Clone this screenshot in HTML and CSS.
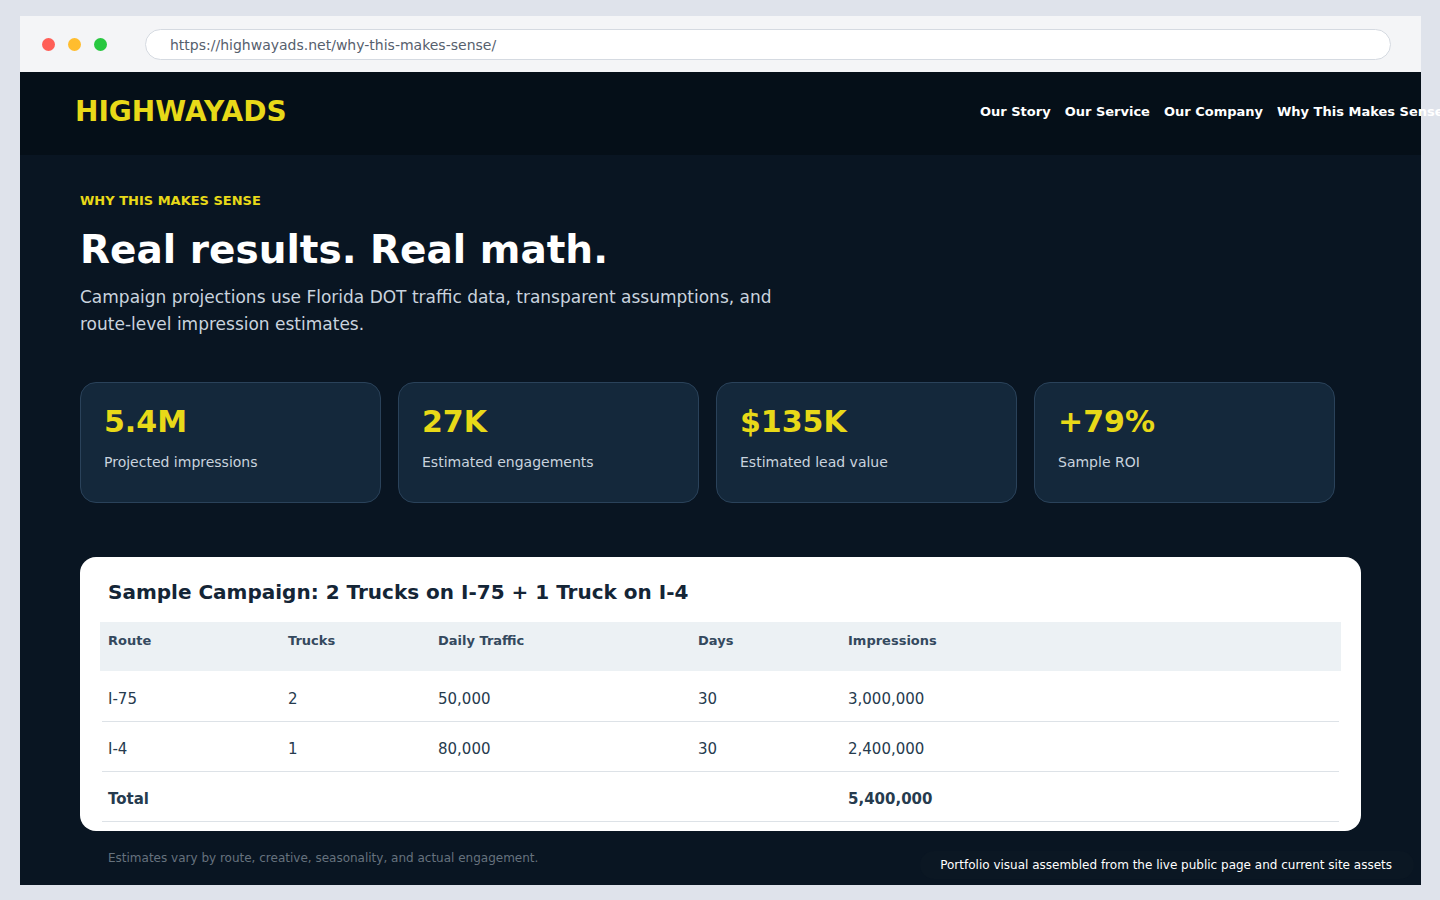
FILE: index.html
```html
<!DOCTYPE html>
<html lang="en">

<head>
  <meta charset="UTF-8">
  <meta name="viewport" content="width=device-width, initial-scale=1.0">
  <title>HighwayAds - Why This Makes Sense</title>
  <link rel="stylesheet" href="styles.css">
</head>

<body>
  <div class="browser">
    <div class="browser-bar">
      <div class="dots">
        <span class="dot red"></span>
        <span class="dot yellow"></span>
        <span class="dot green"></span>
      </div>
      <input class="url" type="text" aria-label="Address" value="https://highwayads.net/why-this-makes-sense/" readonly>
    </div>

    <header class="site-header">
      <a class="logo" href="#">HIGHWAYADS</a>
      <nav class="site-nav">
        <a href="#">Our Story</a>
        <a href="#">Our Service</a>
        <a href="#">Our Company</a>
        <a href="#">Why This Makes Sense</a>
      </nav>
    </header>

    <main class="content">
      <p class="eyebrow">WHY THIS MAKES SENSE</p>
      <h1>Real results. Real math.</h1>
      <p class="lead">Campaign projections use Florida DOT traffic data, transparent assumptions, and route-level impression estimates.</p>

      <section class="stats">
        <div class="stat">
          <div class="stat-value">5.4M</div>
          <div class="stat-label">Projected impressions</div>
        </div>
        <div class="stat">
          <div class="stat-value">27K</div>
          <div class="stat-label">Estimated engagements</div>
        </div>
        <div class="stat">
          <div class="stat-value">$135K</div>
          <div class="stat-label">Estimated lead value</div>
        </div>
        <div class="stat">
          <div class="stat-value">+79%</div>
          <div class="stat-label">Sample ROI</div>
        </div>
      </section>

      <section class="panel">
        <h2 id="campaign-title">Sample Campaign: 2 Trucks on I-75 + 1 Truck on I-4</h2>
        <table class="campaign" aria-labelledby="campaign-title">
          <colgroup>
            <col class="col-route">
            <col class="col-small">
            <col class="col-traffic">
            <col class="col-small">
            <col>
          </colgroup>
          <thead>
            <tr>
              <th>Route</th>
              <th>Trucks</th>
              <th>Daily Traffic</th>
              <th>Days</th>
              <th>Impressions</th>
            </tr>
          </thead>
          <tbody>
            <tr>
              <td>I-75</td>
              <td>2</td>
              <td>50,000</td>
              <td>30</td>
              <td>3,000,000</td>
            </tr>
            <tr>
              <td>I-4</td>
              <td>1</td>
              <td>80,000</td>
              <td>30</td>
              <td>2,400,000</td>
            </tr>
            <tr class="total">
              <td>Total</td>
              <td></td>
              <td></td>
              <td></td>
              <td>5,400,000</td>
            </tr>
          </tbody>
        </table>
      </section>

      <p class="note">Estimates vary by route, creative, seasonality, and actual engagement.</p>
    </main>

    <div class="badge">Portfolio visual assembled from the live public page and current site assets</div>
  </div>
</body>

</html>
```

FILE: styles.css
```css
* {
  box-sizing: border-box;
}

body {
  margin: 0;
  padding: 16px 19px 15px 20px;
  background: #dfe3eb;
  font-family: "DejaVu Sans", Verdana, sans-serif;
  overflow-x: hidden;
}

h1,
h2,
p {
  margin: 0;
}

a {
  color: inherit;
  text-decoration: none;
}

.browser {
  position: relative;
  min-height: calc(100vh - 31px);
  background: #091522;
}

/* Browser chrome */
.browser-bar {
  display: flex;
  align-items: center;
  gap: 38px;
  height: 56px;
  padding: 0 30px 0 22px;
  background: #f4f5f7;
}

.dots {
  display: flex;
  gap: 13px;
}

.dot {
  width: 13px;
  height: 13px;
  border-radius: 50%;
}

.red {
  background: #ff5f57;
}

.yellow {
  background: #ffbd2e;
}

.green {
  background: #28c840;
}

.url {
  flex: 1;
  min-width: 0;
  height: 31px;
  padding: 2px 24px 0;
  border: 1px solid #d5dae1;
  border-radius: 16px;
  background: #fff;
  color: #56606d;
  font-family: inherit;
  font-size: 14px;
}

/* Header */
.site-header {
  display: flex;
  align-items: center;
  justify-content: space-between;
  padding: 24px 0 27px 55px;
  background: #050f18;
}

.logo {
  color: #e8d918;
  font-size: 28px;
  font-weight: bold;
  line-height: 32px;
}

/* the last link runs past the edge of the window */
.site-nav {
  display: flex;
  gap: 14px;
  width: 441px;
  color: #fff;
  font-size: 13px;
  font-weight: bold;
  line-height: 16px;
  white-space: nowrap;
}

/* Page content */
.content {
  padding: 38px 60px 19px;
}

.eyebrow {
  color: #e8d918;
  font-size: 13px;
  font-weight: bold;
  line-height: 16px;
}

h1 {
  margin-top: 17px;
  color: #fff;
  font-size: 39px;
  line-height: 48px;
}

.lead {
  max-width: 720px;
  margin-top: 10px;
  color: #c9d3de;
  font-size: 17px;
  line-height: 27px;
}

.stats {
  display: grid;
  grid-template-columns: repeat(4, 1fr);
  gap: 17px;
  margin: 44px 26px 54px 0;
}

.stat {
  padding: 21px 23px 30px;
  border: 1px solid #2a425a;
  border-radius: 16px;
  background: #14283b;
}

.stat-value {
  color: #e8d918;
  font-size: 30px;
  font-weight: bold;
  line-height: 36px;
}

.stat-label {
  margin-top: 12px;
  color: #c9d3de;
  font-size: 14px;
  line-height: 20px;
}

/* Campaign table */
.panel {
  padding: 23px 20px 9px;
  border-radius: 16px;
  background: #fff;
}

h2 {
  padding: 0 8px;
  color: #142536;
  font-size: 20px;
  line-height: 24px;
}

.campaign {
  width: 100%;
  margin-top: 18px;
  border-spacing: 0;
  table-layout: fixed;
  text-align: left;
}

.col-route {
  width: 180px;
}

.col-small {
  width: 150px;
}

.col-traffic {
  width: 260px;
}

.campaign th {
  padding: 11px 8px 22px;
  border-bottom: 1px solid #fff;
  background: #ecf1f4;
  color: #34495e;
  font-size: 13px;
  line-height: 16px;
}

.campaign td {
  height: 50px;
  padding: 17px 8px 13px;
  color: #263b4e;
  font-size: 15px;
  line-height: 20px;
}

/* row lines stop just short of the header band */
.campaign tbody tr {
  background: linear-gradient(#dde2e7, #dde2e7) no-repeat center bottom / calc(100% - 4px) 1px;
}

.campaign .total td {
  font-weight: bold;
}

.note {
  margin-top: 19px;
  padding-left: 28px;
  color: #66727e;
  font-size: 12px;
  line-height: 16px;
}

.badge {
  position: absolute;
  right: 7px;
  bottom: 6px;
  padding: 6px 22px 6px 20px;
  border-radius: 14px;
  background: #0b1723;
  color: #fff;
  font-size: 12px;
  line-height: 16px;
}
```
